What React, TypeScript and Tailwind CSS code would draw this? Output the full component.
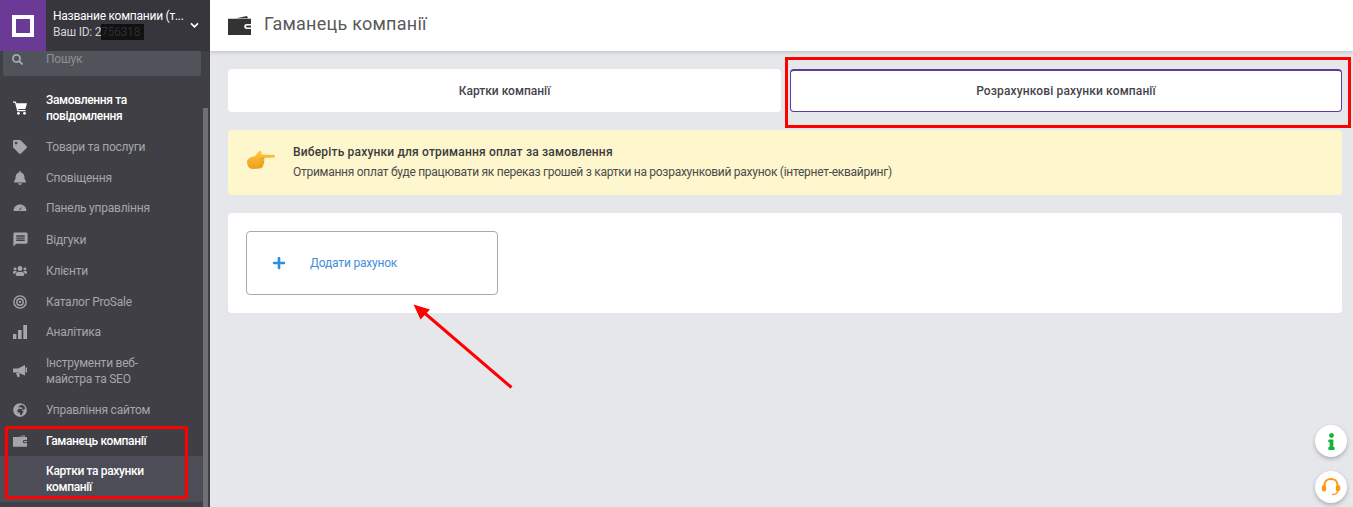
import React from "react";
import { FaTag, FaBell, FaUsers, FaGlobeAfrica, FaSearch, FaInfo, FaPlus } from "react-icons/fa";
import { MdMessage } from "react-icons/md";

const Wallet = ({ className }: { className?: string }) => (
  <svg viewBox="0 0 23 19" className={className} fill="currentColor">
    <path d="M8 2.2 L19 0 L20 2.2Z" />
    <path fillRule="evenodd" d="M0 2.800 H23 V8 H18.500 C15.500 8 15.500 13 18.500 13 H23 V19 H0Z" />
    <path d="M19 9.500 H23 V11.500 H19 C17.800 11.500 17.800 9.500 19 9.500Z" />
  </svg>
);

const Cart = ({ className }: { className?: string }) => (
  <svg viewBox="0 0 15 15" className={className} fill="currentColor">
    <path d="M0 0.500 H3 L3.700 2.500 H15 L13.200 8.500 H5.500 L5.800 9.700 H13.500 V11 H4.600 L2.200 1.900 H0Z" />
    <circle cx="5.800" cy="13.200" r="1.500" />
    <circle cx="12.300" cy="13.200" r="1.500" />
  </svg>
);

const Gauge = ({ className }: { className?: string }) => (
  <svg viewBox="0 0 24 24" className={className} fill="currentColor">
    <path fillRule="evenodd" d="M1 17 C1 10 6 6 12 6 C18 6 23 10 23 17 Z M16.500 9.500 L11 14 C10 15 11.500 16.500 12.500 15.500Z" />
  </svg>
);

const Target = ({ className }: { className?: string }) => (
  <svg viewBox="0 0 24 24" className={className} fill="none" stroke="currentColor">
    <circle cx="12" cy="12" r="10.500" strokeWidth="2.400" />
    <circle cx="12" cy="12" r="5.500" strokeWidth="2.400" />
    <circle cx="12" cy="12" r="2" fill="currentColor" stroke="none" />
  </svg>
);

const Bars = ({ className }: { className?: string }) => (
  <svg viewBox="0 0 14 14" className={className} fill="currentColor">
    <rect x="0" y="9" width="3.400" height="5" />
    <rect x="5" y="5" width="3.600" height="9" />
    <rect x="10.300" y="0" width="3.700" height="14" />
  </svg>
);

const Horn = ({ className }: { className?: string }) => (
  <svg viewBox="0 0 14 14" className={className} fill="currentColor">
    <path d="M0 4.500 H5 L12 1 V11.500 L5 8.500 H0Z" />
    <rect x="12.500" y="3.500" width="1.500" height="5" />
    <path d="M3 9 H6.500 V13 H4.500Z" />
  </svg>
);

const Headset = ({ className }: { className?: string }) => (
  <svg viewBox="0 0 20 20" className={className} fill="none" stroke="currentColor">
    <path d="M3.500 10 V8 C3.500 4.200 6.400 2 10 2 C13.600 2 16.500 4.200 16.500 8 V10" strokeWidth="2" />
    <rect x="0.800" y="8" width="4.400" height="6.500" rx="2.200" fill="currentColor" stroke="none" />
    <rect x="14.800" y="8" width="4.400" height="6.500" rx="2.200" fill="currentColor" stroke="none" />
    <path d="M16.500 14 C16.500 16.500 14.500 17.500 11 17.500" strokeWidth="1.300" />
  </svg>
);

const Hand = () => (
  <svg viewBox="0 0 28 19" className="w-[28px] h-[19px] -mt-[7px]">
    <defs>
      <linearGradient id="handFill" x1="0" y1="0" x2="0" y2="1">
        <stop offset="0" stopColor="#fcc83f" />
        <stop offset="1" stopColor="#ef9f1c" />
      </linearGradient>
    </defs>
    <path d="M0 11 C1 8 4 7 8 6 L12 1.500 C13 0 15 1 14.500 3 L14 4.500 L26.500 5 C28.500 5 28.500 7.500 26.500 7.500 L17 8 C18 9.500 17.500 11 17 12 C17.500 14 16.500 15 16 15.500 C16 17.500 14.500 18.500 13 18.500 L6 19 C2 19 0 16 0 11Z" fill="url(#handFill)" />
    <path d="M13 8.500 H17 M12.500 12 H17 M12 15.500 H16" stroke="#d98f14" strokeWidth="0.600" fill="none" />
  </svg>
);

type Item = { icon: React.ReactNode; label: React.ReactNode; active?: boolean };

const ic = "w-[14px] h-[14px] shrink-0";
const items: Item[] = [
  { icon: <Cart className={ic} />, label: <>Замовлення та<br />повідомлення</>, active: true },
  { icon: <FaTag className={ic} />, label: "Товари та послуги" },
  { icon: <FaBell className={ic} />, label: "Сповіщення" },
  { icon: <Gauge className={ic} />, label: "Панель управління" },
  { icon: <MdMessage className="w-[17px] h-[17px] shrink-0" />, label: "Відгуки" },
  { icon: <FaUsers className={ic} />, label: "Клієнти" },
  { icon: <Target className={ic} />, label: "Каталог ProSale" },
  { icon: <Bars className={ic} />, label: "Аналітика" },
  { icon: <Horn className={ic} />, label: <>Інструменти веб-<br />майстра та SEO</> },
  { icon: <FaGlobeAfrica className={ic} />, label: "Управління сайтом" },
  { icon: <Wallet className={ic} />, label: "Гаманець компанії", active: true },
];

export default function App() {
  return (
    <div className="relative flex w-[1353px] h-[507px] overflow-hidden bg-[#e6e7eb] text-[12px] font-['Roboto',sans-serif]">
      <aside className="relative w-[210px] shrink-0 h-full bg-[#3f3f45] flex flex-col">
        <div className="flex h-[51px] shrink-0 bg-[#36363c]">
          <div className="w-[46px] bg-[#6a3a96] flex items-center justify-center">
            <div className="w-[22px] h-[22px] border-[4px] border-white" />
          </div>
          <div className="flex-1 pl-[7px] pt-[8px] leading-[16px] text-[12px] min-w-0 tracking-[-0.25px]">
            <div className="text-white whitespace-nowrap">Название компании (т...</div>
            <div className="text-[#d3d3d6] whitespace-nowrap flex">
              <span>Ваш ID: 2</span>
              <span className="inline-block w-[43px] h-[16px] bg-[#111113] text-[#303034] blur-[0.5px]">756318</span>
            </div>
          </div>
          <div className="w-[32px] flex items-center justify-center pb-[1px]">
            <svg viewBox="0 0 10 8" className="w-[9px] h-[7px]" fill="none" stroke="white" strokeWidth="2"><path d="M1 1.500 L5 5.500 L9 1.500" /></svg>
          </div>
        </div>
        <div className="ml-[3px] mr-[9px] h-[25px] bg-[#50535a] rounded-b-[2px] flex items-start pt-[1px] text-[#8f9095]">
          <FaSearch className="w-[11px] h-[11px] text-[#a9aaae] ml-[9px] mt-[2px]" />
          <span className="ml-[23px] leading-[14px] tracking-[-0.2px]">Пошук</span>
        </div>
        <nav className="flex flex-col pt-[8.6px] pr-[7px]">
          {items.map((it, i) => (
            <div key={i} className={`flex items-center py-[7.4px] pl-[13px] leading-[16px] ${it.active ? "text-white" : "text-[#a6a6aa]"}`}>
              <span className={`w-[14px] flex justify-center shrink-0 ${i === 0 ? "text-white" : "text-[#a6a6aa]"}`}>{it.icon}</span>
              <span className={`ml-[19px] ${it.active ? "font-medium tracking-[-0.35px]" : "tracking-[-0.24px]"}`}>{it.label}</span>
            </div>
          ))}
          <div className="bg-[#4c4d56] text-white font-medium tracking-[-0.35px] pl-[46px] pt-[7px] pb-[7px] leading-[16px]">
            Картки та рахунки<br />компанії
          </div>
        </nav>
        <div className="absolute right-[2px] top-[108px] bottom-0 w-[5px] bg-[#6f7074]" />
      </aside>

      <main className="flex-1 min-w-0 flex flex-col">
        <header className="h-[51px] shrink-0 bg-white shadow-[0_1px_4px_rgba(0,0,0,0.18)] flex items-center pl-[18px]">
          <Wallet className="w-[23px] h-[19px] text-[#333336] -mt-[1px]" />
          <h1 className="ml-[13px] text-[18px] text-[#595959] font-normal leading-[24px] -mt-[3px] tracking-[0.25px]">Гаманець компанії</h1>
        </header>
        <div className="flex flex-col pl-[18px] pr-[11px] pt-[18px] gap-[18px]">
          <div className="flex gap-[9px]">
            <div className="w-[553px] h-[43px] bg-white rounded-[4px] flex items-center justify-center font-medium text-[#45454d]">Картки компанії</div>
            <div className="flex-1 h-[43px] bg-white rounded-[4px] border border-[#5f3a9a] border-t-2 flex items-center justify-center font-medium text-[#45454d] tracking-[0.14px]">Розрахункові рахунки компанії</div>
          </div>
          <div className="h-[65px] bg-[#fef6cc] rounded-[4px] flex items-center pl-[19px]">
            <Hand />
            <div className="ml-[18px] leading-[20px] text-[#4b4b4b] -mt-[2px]">
              <div className="font-medium text-[#3b3b40] tracking-[0.18px]">Виберіть рахунки для отримання оплат за замовлення</div>
              <div className="tracking-[-0.275px]">Отримання оплат буде працювати як переказ грошей з картки на розрахунковий рахунок (інтернет-еквайринг)</div>
            </div>
          </div>
          <div className="h-[100px] bg-white rounded-[4px] p-[18px]">
            <div className="w-[252px] h-[64px] rounded-[4px] border border-[#a9a8b8] flex items-center pl-[25px] text-[#3f8fdc]">
              <FaPlus className="w-[14px] h-[14px] text-[#2a8fdc]" />
              <span className="ml-[24px] tracking-[-0.2px]">Додати рахунок</span>
            </div>
          </div>
        </div>
      </main>

      <div className="absolute left-[5px] top-[426px] w-[183px] h-[73px] border-[3px] border-[#fe0000] rounded-[2px]" />
      <div className="absolute left-[785px] top-[57px] w-[566px] h-[71px] border-[3px] border-[#fe0000]" />
      <svg className="absolute left-[405px] top-[295px] w-[115px] h-[100px]" viewBox="0 0 115 100">
        <line x1="106.500" y1="92.500" x2="16" y2="15" stroke="#fe0000" strokeWidth="3" />
        <path d="M8.500 9.500 L25 14.500 L15.500 24.500Z" fill="#fe0000" />
      </svg>
      <div className="absolute left-[1315px] top-[425px] w-[32px] h-[32px] rounded-full bg-white shadow-[0_2px_4px_rgba(0,0,0,0.25)] flex items-center justify-center text-[#12b53c]">
        <FaInfo className="w-[17px] h-[17px]" />
      </div>
      <div className="absolute left-[1315px] top-[471px] w-[32px] h-[32px] rounded-full bg-white shadow-[0_2px_4px_rgba(0,0,0,0.25)] flex items-center justify-center text-[#fb9a14]">
        <Headset className="w-[20px] h-[20px]" />
      </div>
    </div>
  );
}
